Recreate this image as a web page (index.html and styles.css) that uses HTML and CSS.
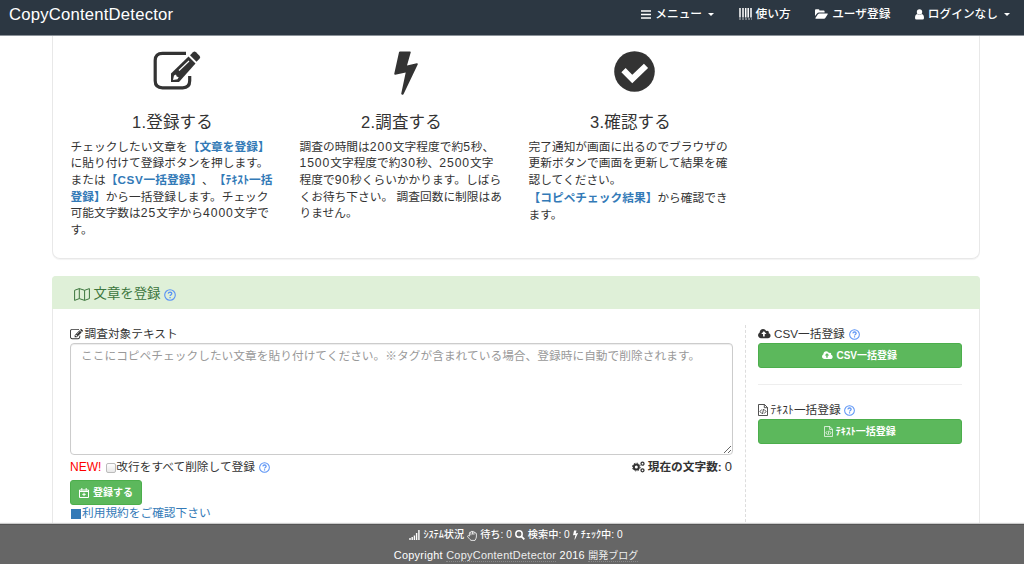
FILE: index.html
```html
<!DOCTYPE html>
<html lang="ja">
<head>
<meta charset="utf-8">
<title>CopyContentDetector</title>
<link rel="stylesheet" href="styles.css">
</head>
<body>
<svg class="defs" width="0" height="0">
  <symbol id="edit" viewBox="0 0 1792 1792"><path fill="currentColor" d="M888 1184l116-116-152-152-116 116v56h96v96h56zm440-720q-16-16-33 1l-350 350q-17 17-1 33t33-1l350-350q17-17 1-33zm80 594v190q0 119-84.5 203.5t-203.5 84.5h-832q-119 0-203.5-84.5t-84.5-203.5v-832q0-119 84.5-203.5t203.5-84.5h832q63 0 117 25 15 7 18 23 3 17-9 29l-49 49q-14 14-32 8-23-6-45-6h-832q-66 0-113 47t-47 113v832q0 66 47 113t113 47h832q66 0 113-47t47-113v-126q0-13 9-22l64-64q15-15 35-7t20 29zm-96-738l288 288-672 672h-288v-288zm444 132l-92 92-288-288 92-92q28-28 68-28t68 28l152 152q28 28 28 68t-28 68z"/></symbol>
  <symbol id="cloud" viewBox="-64 128 1984 1536"><path fill="currentColor" d="M1216 864q0-14-9-23l-352-352q-9-9-23-9t-23 9l-351 351q-10 12-10 24 0 14 9 23t23 9h224v352q0 13 9.500 22.500t22.500 9.500h192q13 0 22.500-9.500t9.500-22.500v-352h224q13 0 22.500-9.500t9.500-22.500zm640 288q0 159-112.500 271.500t-271.500 112.500h-1088q-185 0-316.500-131.500t-131.500-316.500q0-130 70-240t188-165q-2-30-2-43 0-212 150-362t362-150q156 0 285.500 87t188.500 231q71-62 166-62 106 0 181 75t75 181q0 76-41 138 130 31 213.500 135.500t83.500 238.500z"/></symbol>
  <symbol id="help" viewBox="0 0 12 12"><circle cx="6" cy="6" r="5.300" fill="none" stroke="currentColor" stroke-width="1.1"/><path d="M4.200 4.700Q4.400 3.100 6.100 3.100Q7.800 3.200 7.800 4.600Q7.800 5.400 6.900 5.900Q6.100 6.300 6.100 7.100" fill="none" stroke="currentColor" stroke-width="1.300"/><path d="M5.400 7.900h1.300v1.300h-1.300z" fill="currentColor"/></symbol>
  <symbol id="code" viewBox="0 0 10 12"><path d="M.5.5h6L9.500 3.500v8h-9zM6.300.5v3.200h3.200M3.700 5.500L2 7.500l1.700 2M6.300 5.500L8 7.500l-1.700 2M5.500 5l-1 5" fill="none" stroke="currentColor" stroke-width=".85"/></symbol>
  <symbol id="bolt" viewBox="0 0 24 44"><path d="M6 .5h10q1 0 .7 1L13 14.500l9.800-2.200q1.400-.1.900 1.200L9.500 43.200q-1.500 1.500-2.300-.4L11.700 21.500 1.200 23.700Q0 23.700.3 22.500L5 1.200Q5.200.5 6 .5z" fill="currentColor"/></symbol>
</svg>

<header class="navbar">
  <a class="brand">CopyContentDetector</a>
  <nav class="menu">
    <a class="item"><svg width="10" height="9" viewBox="0 0 10 9"><path d="M0 1h10M0 4.500h10M0 8h10" stroke="currentColor" stroke-width="1.700"/></svg>メニュー<i class="caret"></i></a>
    <a class="item"><svg width="13" height="12" viewBox="0 0 13 12"><path d="M1 0v9.500M4 0v9.500M6.700 0v9.500M9.200 0v9.500M12 0v9.500" stroke="currentColor" stroke-width="1.500"/><path d="M0 11h13" stroke="currentColor" stroke-dasharray="2 1" opacity=".7"/></svg>使い方</a>
    <a class="item"><svg width="13" height="10" viewBox="0 0 13 10"><path d="M0 7V1.200Q0 .3.900.3h2.600q.9 0 .9.900v.4h4.300q.9 0 .9.900v1H4Q2.800 3.500 2 4.500zM.4 9l2.500-3.700q.6-.9 1.400-.9h8q.8 0 .4.800L10.500 8.800q-.5.900-1.500.9H1Q.1 9.700.4 9z" fill="currentColor"/></svg>ユーザ登録</a>
    <a class="item user"><svg width="9" height="11" viewBox="0 0 9 11"><circle cx="4.500" cy="3" r="2.700" fill="currentColor"/><path d="M2.200 5Q0 5.500 0 9q0 1.500 1.500 1.500h6Q9 10.500 9 9 9 5.500 6.800 5 4.500 7 2.200 5z" fill="currentColor"/></svg>ログインなし<i class="caret"></i></a>
  </nav>
</header>

<main class="page">
  <section class="panel steps">
    <article class="step">
      <div class="hero"><svg class="hero-edit" width="48" height="40" viewBox="0 0 48 40"><path d="M33 2.300H9.500Q2.200 2.300 2.200 9.300v20.500q0 7 7.300 7H29.700q7 0 7-7V25" fill="none" stroke="currentColor" stroke-width="3.200"/><path d="M18 31v-8.500L35.500 5.500l7 7L26 31z" fill="currentColor"/><path d="M37 4.200l3-3q1.500-1.200 3 0l3.500 3.500q1.500 1.500 0 3l-3 3z" fill="currentColor"/><path d="M26 19.500L36 10" stroke="#fff" stroke-width="1.200"/><path d="M20 29l1-4.500 2-1 .7 2 2 .7-1.200 2z" fill="#fff"/></svg></div>
      <h2>1.登録する</h2>
      <p>チェックしたい文章を<b>【文章を登録】</b><br>に貼り付けて登録ボタンを押します。<br>または<b>【<span class="csv">CSV</span>一括登録】</b>、<b>【ﾃｷｽﾄ一括<br>登録】</b>から一括登録します。チェック<br>可能文字数は<span class="num">25</span>文字から<span class="num">4000</span>文字で<br>す。</p>
    </article>
    <article class="step">
      <div class="hero"><svg class="hero-bolt" width="24" height="44"><use href="#bolt"/></svg></div>
      <h2>2.調査する</h2>
      <p>調査の時間は<span class="num">200</span>文字程度で約<span class="num">5</span>秒、<br><span class="num">1500</span>文字程度で約<span class="num">30</span>秒、<span class="num">2500</span>文字<br>程度で<span class="num">90</span>秒くらいかかります。しばら<br>くお待ち下さい。 調査回数に制限はあ<br>りません。</p>
    </article>
    <article class="step">
      <div class="hero"><svg class="hero-check" width="41" height="41" viewBox="0 0 41 41"><circle cx="20.500" cy="20.500" r="20.300" fill="currentColor"/><path d="M9.500 19.200L18.300 28 32 14.800" fill="none" stroke="#fff" stroke-width="6" stroke-linejoin="miter"/></svg></div>
      <h2>3.確認する</h2>
      <p>完了通知が画面に出るのでブラウザの<br>更新ボタンで画面を更新して結果を確<br>認してください。</p>
      <p class="result"><b>【コピペチェック結果】</b>から確認でき<br>ます。</p>
    </article>
  </section>

  <section class="panel register">
    <h3 class="panel-head"><svg width="16" height="13" viewBox="0 0 16 13"><path d="M.6 2.300L5.300.6l5.300 1.700L15.400.6v10l-4.800 1.800-5.300-1.800-4.700 1.800zM5.300.6v10M10.600 2.300v10" fill="none" stroke="currentColor" stroke-width="1"/></svg><span>文章を登録</span><svg class="help" width="12" height="12"><use href="#help"/></svg></h3>
    <div class="panel-body">
      <div class="form">
        <label class="label target"><svg width="13" height="13"><use href="#edit"/></svg><span>調査対象テキスト</span></label>
        <textarea class="source" placeholder="ここにコピペチェックしたい文章を貼り付けてください。※タグが含まれている場合、登録時に自動で削除されます。"></textarea>
        <div class="options">
          <span class="new">NEW!</span><i class="box"></i><span>改行をすべて削除して登録</span><svg class="help" width="11" height="11"><use href="#help"/></svg>
          <span class="count"><svg width="13" height="12" viewBox="0 0 13 12"><circle cx="4.300" cy="6" r="2.500" fill="none" stroke="currentColor" stroke-width="2"/><circle cx="4.300" cy="6" r="3.900" fill="none" stroke="currentColor" stroke-width="1" stroke-dasharray="1.500 1.560"/><circle cx="10.500" cy="2.700" r="1.500" fill="none" stroke="currentColor" stroke-width="1.300"/><circle cx="10.500" cy="9.300" r="1.500" fill="none" stroke="currentColor" stroke-width="1.300"/></svg><strong>現在の文字数:</strong><span class="zero">0</span></span>
        </div>
        <button class="btn submit"><svg width="10" height="10" viewBox="0 0 10 10"><path d="M.5 2h9v7.500h-9zM.5 3.500h9M2.800 0v2.500M7.200 0v2.500M5 4.700v3.400M3.300 6.400h3.400" fill="none" stroke="currentColor" stroke-width="1"/></svg><span>登録する</span></button>
        <a class="terms"><i class="square"></i>利用規約をご確認下さい</a>
      </div>
      <aside class="bulk">
        <label class="label"><svg width="13" height="10"><use href="#cloud"/></svg><span>CSV一括登録</span><svg class="help" width="11" height="11"><use href="#help"/></svg></label>
        <button class="btn wide"><svg width="11" height="9"><use href="#cloud"/></svg><span>CSV一括登録</span></button>
        <hr>
        <label class="label text"><svg width="10" height="12"><use href="#code"/></svg><span>ﾃｷｽﾄ一括登録</span><svg class="help" width="11" height="11"><use href="#help"/></svg></label>
        <button class="btn wide"><svg class="thin" width="9" height="11"><use href="#code"/></svg><span>ﾃｷｽﾄ一括登録</span></button>
      </aside>
    </div>
  </section>
</main>

<footer class="footer">
  <div class="status">
    <svg width="11" height="10" viewBox="0 0 11 10"><path d="M1 8v2M3.200 7v3M5.400 5.500v4.500M7.600 3v7M9.900 0v10" stroke="currentColor" stroke-width="1.400"/></svg><span>ｼｽﾃﾑ状況</span>
    <svg width="10" height="11" viewBox="0 0 10 11"><path d="M3 9.500L.7 6.800Q.2 5.700 1.500 5.500l.9.600V3q.2-1.200 1.300-.7Q3.900.8 5.200 1.500 6.400.7 6.800 2.200 8 1.700 8.200 3q1.300-.2 1.200 1v3Q9 8.800 8 10.400H4zM3.900 2.300v3M5.500 1.500v3M6.900 2.300v2.500" fill="none" stroke="currentColor" stroke-width=".8"/></svg><span>待ち: 0</span>
    <svg width="10" height="10" viewBox="0 0 10 10"><circle cx="4" cy="4" r="3.200" fill="none" stroke="currentColor" stroke-width="1.500"/><path d="M6.300 6.300L9.300 9.300" stroke="currentColor" stroke-width="1.800"/></svg><span>検索中: 0</span>
    <svg width="5" height="10"><use href="#bolt"/></svg><span>ﾁｪｯｸ中: 0</span>
  </div>
  <div class="copy">Copyright <a>CopyContentDetector</a> 2016 <a class="blog">開発ブログ</a></div>
</footer>
</body>
</html>
```
FILE: styles.css
```css
* { box-sizing: border-box; }
body {
  margin: 0;
  height: 564px;
  display: flex;
  flex-direction: column;
  overflow: hidden;
  background: #fff;
  color: #333;
  font: 11.7px/16.7px "Liberation Sans", "Noto Sans CJK JP", sans-serif;
  text-spacing-trim: space-all;
}
svg { flex: none; display: block; }
.defs { position: absolute; }
h2, h3, p { margin: 0; font-weight: 400; }
.csv { letter-spacing: .7px; }
.num { font-size: 12.2px; line-height: 1; letter-spacing: .9px; }

.navbar {
  flex: none;
  height: 36px;
  display: flex;
  justify-content: space-between;
  padding: 1px 14px 7px 9px;
  background: #2c3742;
  border-bottom: 1px solid #8b9299;
  color: #fff;
}
.brand { font-size: 16.7px; line-height: 28px; letter-spacing: .2px; }
.menu { display: flex; gap: 24.5px; align-items: center; font-weight: 500; }
.item { display: flex; align-items: center; gap: 4px; white-space: nowrap; }
.caret {
  margin-left: 2px;
  border: 3.5px solid transparent;
  border-top-color: currentColor;
  border-bottom: 0;
}

.page {
  flex: 1;
  min-height: 0;
  overflow: hidden;
  width: 928px;
  margin-left: 52px;
}
.panel { border: 1px solid #e8e8e8; box-shadow: 0 1px 1px rgba(0,0,0,.05); }
.steps {
  height: 222.5px;
  border-top: 0;
  border-radius: 0 0 8px 8px;
  display: flex;
  gap: 25px;
  padding: 15px 17px 0 17.5px;
}
.step { width: 204px; white-space: nowrap; }
.hero { height: 57.5px; display: flex; justify-content: center; align-items: flex-start; }
.hero-edit { margin-left: 8px; }
.hero-bolt { margin-left: 9px; }
.hero-check { margin-left: 8px; }
.step h2 { height: 30px; text-align: center; font-size: 16.5px; line-height: 26px; letter-spacing: .2px; }
.step p { letter-spacing: .03px; }
.step b { color: #337ab7; }
.result { padding-top: 1.5px; }

.register { margin-top: 17.5px; border-radius: 4px 4px 0 0; height: 270px; }
.panel-head {
  height: 33px;
  display: flex;
  align-items: center;
  gap: 3.5px;
  padding: 4px 22px 0;
  margin: -1px -1px 0;
  border-radius: 4px 4px 0 0;
  background: #dff0d8;
  color: #3c763d;
  font-size: 13.4px;
}
.help { color: #5a93f5; }
.panel-body { display: flex; padding: 16px 17px 0; }
.form { width: 676px; height: 197px; padding-right: 13px; border-right: 1px dashed #ddd; }
.label { display: flex; align-items: center; gap: 3px; height: 18px; }
.label.target { gap: 1.5px; }
.source {
  display: block;
  width: 662.5px;
  height: 112px;
  padding: 4px 10px;
  border: 1px solid #ccc;
  border-radius: 4px;
  box-shadow: inset 0 1px 1px rgba(0,0,0,.075);
  font: inherit;
  letter-spacing: .03px;
}
.source::placeholder { color: #999; }
.options { display: flex; align-items: center; height: 24.5px; }
.new { color: #f00; font-size: 12px; margin-right: 5px; }
.box { width: 10px; height: 10px; margin: 2px 0 0; border: 1px solid #bbb; border-radius: 2px; background: linear-gradient(#fff, #e8e8e8); }
.options .help { margin-left: 4px; }
.count { margin-left: auto; display: flex; align-items: center; gap: 3px; }
.zero { font-size: 13px; }
.btn {
  display: flex;
  align-items: center;
  justify-content: center;
  gap: 3px;
  height: 25px;
  padding: 1px 0 0;
  border: 1px solid #4cae4c;
  border-radius: 3px;
  background: #5cb85c;
  color: #fff;
  font: 500 10px/16px "Liberation Sans", "Noto Sans CJK JP", sans-serif;
}
.btn span { font-weight: 700; }
.submit { width: 72px; gap: 4px; }
.terms { display: flex; align-items: center; color: #337ab7; height: 18px; }
.square { width: 10px; height: 10px; margin: 0 1px; background: #337ab7; }
.bulk { width: 203.5px; margin-left: 12px; }
.bulk .label { height: 17.5px; padding-top: 1px; }
.wide { width: 100%; }
.bulk .help { margin-left: 1px; }
.bulk hr { margin: 16px 0 16.5px; border: 0; border-top: 1px solid #eee; }
.bulk .label.text { gap: 2.5px; }

.footer {
  flex: none;
  height: 40px;
  padding-top: 2px;
  background: #666;
  border-top: 1px solid #555;
  box-shadow: 0 -1px 1px #ccc;
  color: #fff;
  font-size: 10.2px;
  text-align: center;
  z-index: 1;
}
.status { display: flex; justify-content: center; align-items: center; gap: 3px; height: 16px; padding-left: 8px; font-weight: 500; }
.copy { margin-top: 4px; padding-left: 8px; font-size: 10.9px; letter-spacing: .28px; }
.copy a { border-bottom: 1px dotted #888; color: #eee; }
.copy .blog { font-size: 10px; letter-spacing: 0; }
```
